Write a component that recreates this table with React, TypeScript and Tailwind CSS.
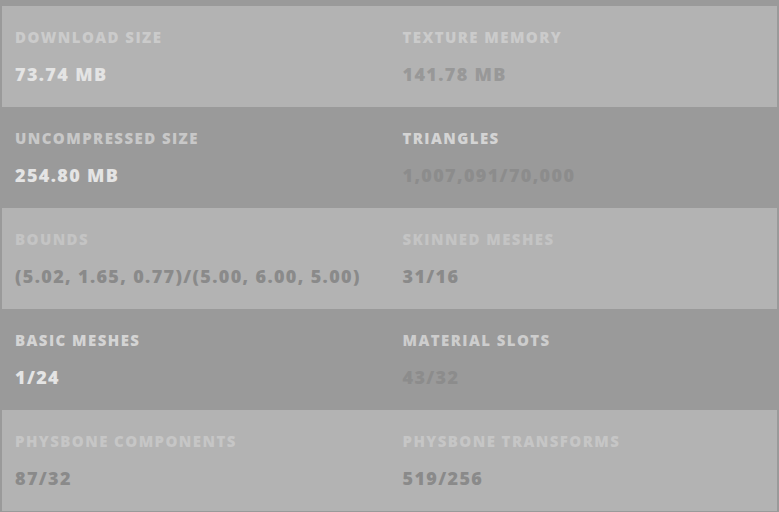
import React from 'react';

interface Stat {
  label: string;
  value: string;
  labelColor: string;
  valueColor: string;
}

const rows: { light: boolean; cells: Stat[] }[] = [
  {
    light: true,
    cells: [
      { label: 'Download Size', value: '73.74 MB', labelColor: 'text-[#cbcbcb]', valueColor: 'text-[#e4e4e4]' },
      { label: 'Texture Memory', value: '141.78 MB', labelColor: 'text-[#cbcbcb]', valueColor: 'text-[#989898]' },
    ],
  },
  {
    light: false,
    cells: [
      { label: 'Uncompressed Size', value: '254.80 MB', labelColor: 'text-[#c8c8c8]', valueColor: 'text-[#e4e4e4]' },
      { label: 'Triangles', value: '1,007,091/70,000', labelColor: 'text-[#d4d4d4]', valueColor: 'text-[#8c8c8c]' },
    ],
  },
  {
    light: true,
    cells: [
      { label: 'Bounds', value: '(5.02, 1.65, 0.77)/(5.00, 6.00, 5.00)', labelColor: 'text-[#c4c4c4]', valueColor: 'text-[#8a8a8a]' },
      { label: 'Skinned Meshes', value: '31/16', labelColor: 'text-[#c4c4c4]', valueColor: 'text-[#8a8a8a]' },
    ],
  },
  {
    light: false,
    cells: [
      { label: 'Basic Meshes', value: '1/24', labelColor: 'text-[#d4d4d4]', valueColor: 'text-[#e4e4e4]' },
      { label: 'Material Slots', value: '43/32', labelColor: 'text-[#cdcdcd]', valueColor: 'text-[#8c8c8c]' },
    ],
  },
  {
    light: true,
    cells: [
      { label: 'PhysBone Components', value: '87/32', labelColor: 'text-[#c6c6c6]', valueColor: 'text-[#8a8a8a]' },
      { label: 'PhysBone Transforms', value: '519/256', labelColor: 'text-[#c6c6c6]', valueColor: 'text-[#8a8a8a]' },
    ],
  },
];

export default function App() {
  return (
    <div
      className="w-[779px] h-[512px] bg-[#9a9a9a] pt-[6px] px-[2px] pb-[1px] overflow-hidden"
      style={{ fontFamily: '"Open Sans", "Noto Sans", sans-serif' }}
    >
      {rows.map((row, i) => (
        <div
          key={i}
          className={`grid grid-cols-2 h-[101px] ${row.light ? 'bg-[#b3b3b3]' : 'bg-[#9a9a9a]'}`}
        >
          {row.cells.map((cell) => (
            <div key={cell.label} className="pl-[13px] pt-[21px]">
              <div className={`text-[15px] leading-[20px] font-extrabold uppercase tracking-[0.095em] ${cell.labelColor}`}>
                {cell.label}
              </div>
              <div className={`mt-[15px] text-[18px] leading-[24px] font-extrabold tracking-[0.075em] whitespace-nowrap ${cell.valueColor}`}>
                {cell.value}
              </div>
            </div>
          ))}
        </div>
      ))}
    </div>
  );
}
